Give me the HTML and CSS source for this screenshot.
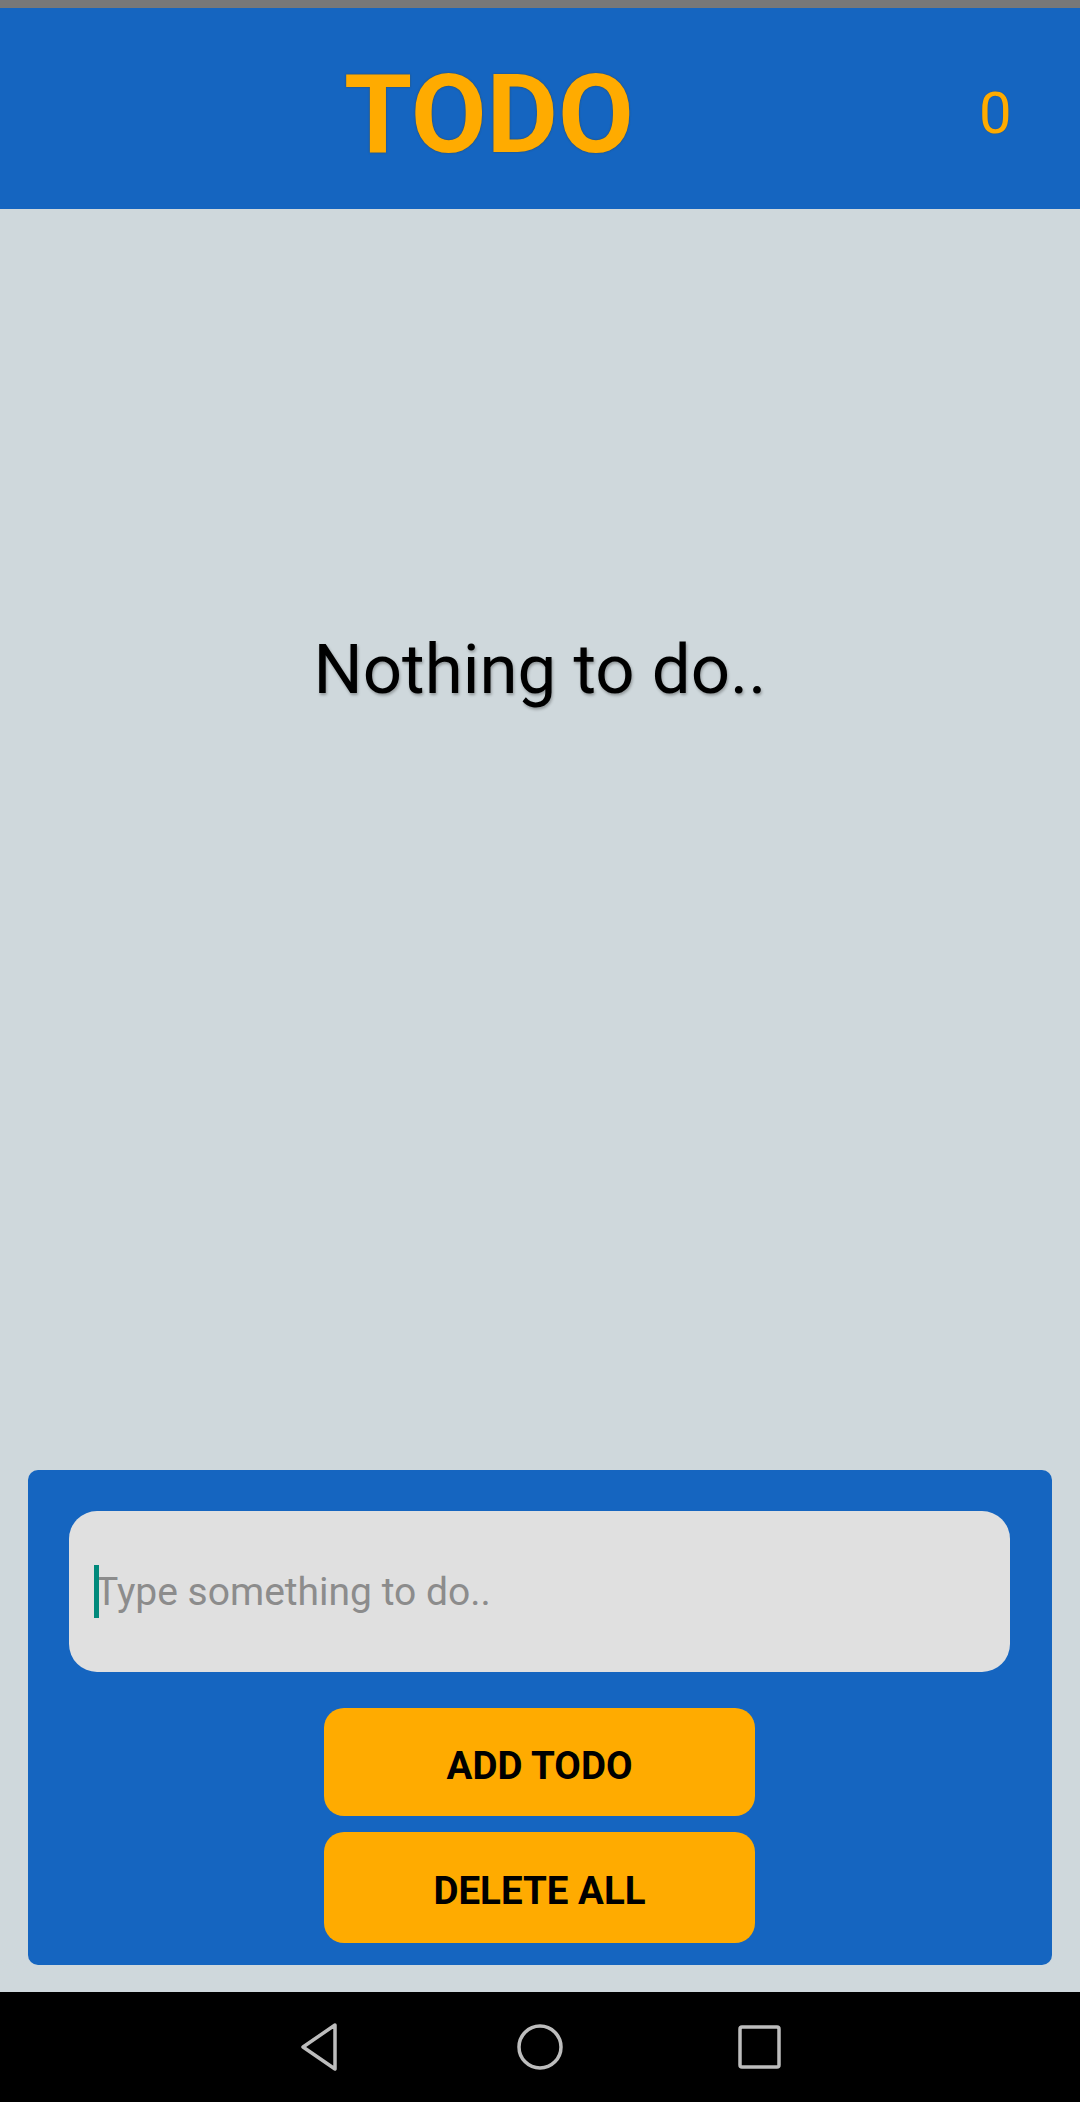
FILE: index.html
```html
<!DOCTYPE html>
<html>
<head>
<meta charset="utf-8">
<link rel="stylesheet" href="styles.css">
</head>
<body>
<div class="screen">
  <div class="statusbar"></div>
  <header class="header">
    <div class="title">TODO</div>
    <div class="count">0</div>
  </header>
  <main class="main">
    <div class="empty">
      <p class="message">Nothing to do..</p>
    </div>
    <section class="panel">
      <div class="field">
        <span class="caret"></span>
        <span class="placeholder">Type something to do..</span>
      </div>
      <div class="actions">
        <button class="btn">ADD TODO</button>
        <button class="btn btn-tall">DELETE ALL</button>
      </div>
    </section>
  </main>
  <nav class="navbar">
    <span class="nav-item">
      <svg width="44" height="50" viewBox="0 0 44 50"><path d="M37 3 L5 25 L37 47 Z" fill="none" stroke="#bdbdbd" stroke-width="3.5" stroke-linejoin="round"/></svg>
    </span>
    <span class="nav-item">
      <svg width="48" height="48" viewBox="0 0 48 48"><circle cx="24" cy="24" r="21" fill="none" stroke="#bdbdbd" stroke-width="3.5"/></svg>
    </span>
    <span class="nav-item">
      <svg width="46" height="46" viewBox="0 0 46 46"><rect x="3" y="3" width="39" height="40" rx="2" fill="none" stroke="#bdbdbd" stroke-width="3.5"/></svg>
    </span>
  </nav>
</div>
</body>
</html>
```

FILE: styles.css
```css
* { box-sizing: border-box; }
html, body { margin: 0; padding: 0; }
body {
  width: 1080px;
  height: 2102px;
  background: #cfd8dc;
  font-family: Roboto, "Liberation Sans", sans-serif;
  overflow: hidden;
}
.screen {
  display: flex;
  flex-direction: column;
  height: 2102px;
}
.statusbar {
  height: 8px;
  background: #787878;
}
.header {
  height: 201px;
  background: #1565c0;
  display: flex;
  align-items: center;
  padding-top: 11px;
}
.title {
  flex: 1;
  text-align: center;
  color: #ffab00;
  font-size: 110px;
  font-weight: 700;
  line-height: 1.1;
  text-shadow: 0 0 2px rgba(60, 60, 40, 0.7);
}
.count {
  width: 102px;
  padding-left: 1px;
  color: #ffab00;
  font-size: 58px;
  line-height: 1.1;
  text-shadow: 0 0 1px rgba(60, 60, 40, 0.5);
}
.main {
  flex: 1;
  display: flex;
  flex-direction: column;
}
.empty {
  flex: 1;
  padding-top: 420px;
}
.message {
  margin: 0;
  text-align: center;
  font-size: 69px;
  color: #000;
  text-shadow: 1px 2px 3px rgba(0, 0, 0, 0.3);
}
.panel {
  margin: 0 28px 27px;
  height: 495px;
  background: #1565c0;
  border-radius: 10px;
  padding: 41px 42px 22px 41px;
  display: flex;
  flex-direction: column;
}
.field {
  height: 161px;
  background: #e0e0e0;
  border-radius: 28px;
  display: flex;
  align-items: center;
  padding-left: 25px;
}
.caret {
  width: 5px;
  height: 53px;
  background: #00897b;
  margin-right: -4px;
  position: relative;
  z-index: 1;
}
.placeholder {
  font-size: 39px;
  color: #8c8c8c;
}
.actions {
  margin-top: 36px;
  display: flex;
  flex-direction: column;
  align-items: center;
  gap: 16px;
}
.btn {
  width: 431px;
  height: 108px;
  border: none;
  border-radius: 20px;
  background: #ffab00;
  color: #000;
  font-family: Roboto, "Liberation Sans", sans-serif;
  font-size: 38.5px;
  font-weight: 700;
  padding: 6px 0 0;
}
.btn-tall { height: 111px; }
.navbar {
  height: 110px;
  background: #000;
  display: flex;
  align-items: center;
  justify-content: center;
  gap: 160px;
}
.nav-item {
  width: 60px;
  display: flex;
  justify-content: center;
}
.nav-item svg { display: block; }
```
